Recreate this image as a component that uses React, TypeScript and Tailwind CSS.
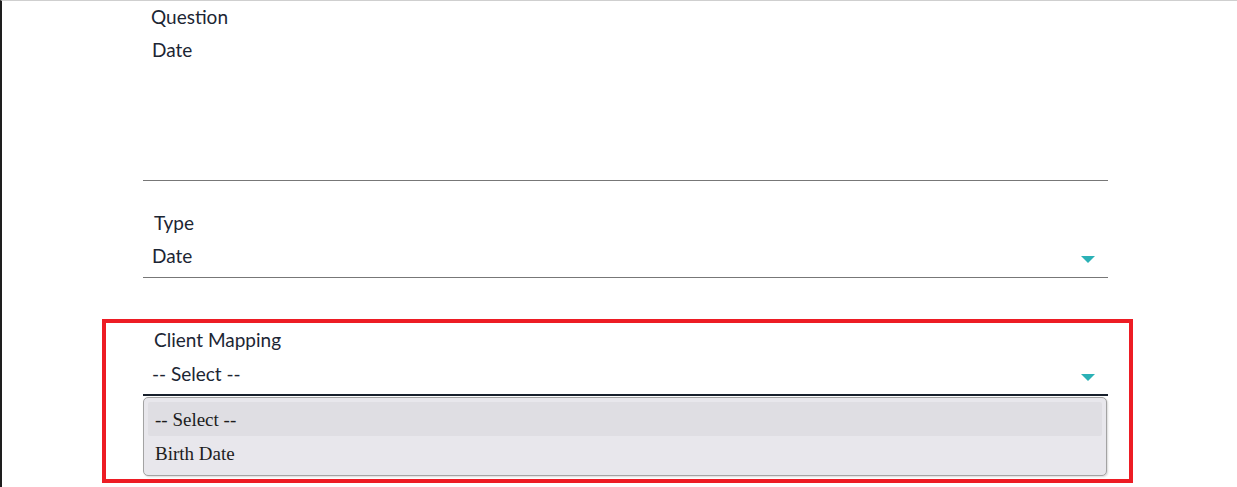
import React from "react";

const Caret: React.FC = () => (
  <svg width="14" height="7" viewBox="0 0 14 7" className="mt-[7px] mr-[13px]">
    <path d="M0 0 H14 L7 7 Z" fill="#2bb1b6" />
  </svg>
);

const options = ["-- Select --", "Birth Date"];

const App: React.FC = () => {
  return (
    <div
      className="h-[487px] w-full overflow-hidden bg-white border-t border-t-[#cfcfcf] border-l-2 border-l-[#1e1e1e] text-[#1c2533] text-[19px]"
      style={{ fontFamily: "Lato, 'Open Sans', sans-serif" }}
    >
      {/* Question */}
      <div className="ml-[141px] w-[965px] h-[180px] border-b border-[#777777] pt-[4px]">
        <div className="pl-[8px] leading-[24px]">Question</div>
        <div className="pl-[9px] mt-[9px] leading-[24px]">Date</div>
      </div>

      {/* Type */}
      <div className="ml-[141px] w-[965px] border-b border-[#777777] pt-[30px] pb-[9px]">
        <div className="pl-[11px] leading-[24px]">Type</div>
        <div className="mt-[9px] flex justify-between items-center">
          <span className="pl-[9px] leading-[24px]">Date</span>
          <Caret />
        </div>
      </div>

      {/* Client Mapping (highlighted) */}
      <div className="ml-[100px] mt-[41px] w-[1031px] border-4 border-[#ed1c24] pl-[37px] pr-[21px] pt-[5px] pb-[3px]">
        <div className="pl-[11px] leading-[24px]">Client Mapping</div>
        <div className="mt-[10px] pb-[8px] border-b-2 border-[#18202c] flex justify-between items-center">
          <span className="pl-[9px] leading-[24px]">-- Select --</span>
          <Caret />
        </div>
        <div
          className="mt-[1px] mr-[1px] rounded-[5px] border border-[#a3a3a3] bg-[#e8e7ec] px-[4px] pt-[4px] pb-[5px] shadow-[1px_1px_2px_rgba(0,0,0,0.15)] text-[19px] text-[#1d1d1d]"
          style={{ fontFamily: "'Liberation Serif', 'Times New Roman', serif" }}
        >
          {options.map((o, i) => (
            <div
              key={o}
              className={`h-[34px] flex items-center pt-[2px] pl-[7px] rounded-[2px] ${
                i === 0 ? "bg-[#dfdee3]" : ""
              }`}
            >
              {o}
            </div>
          ))}
        </div>
      </div>
    </div>
  );
};

export default App;
